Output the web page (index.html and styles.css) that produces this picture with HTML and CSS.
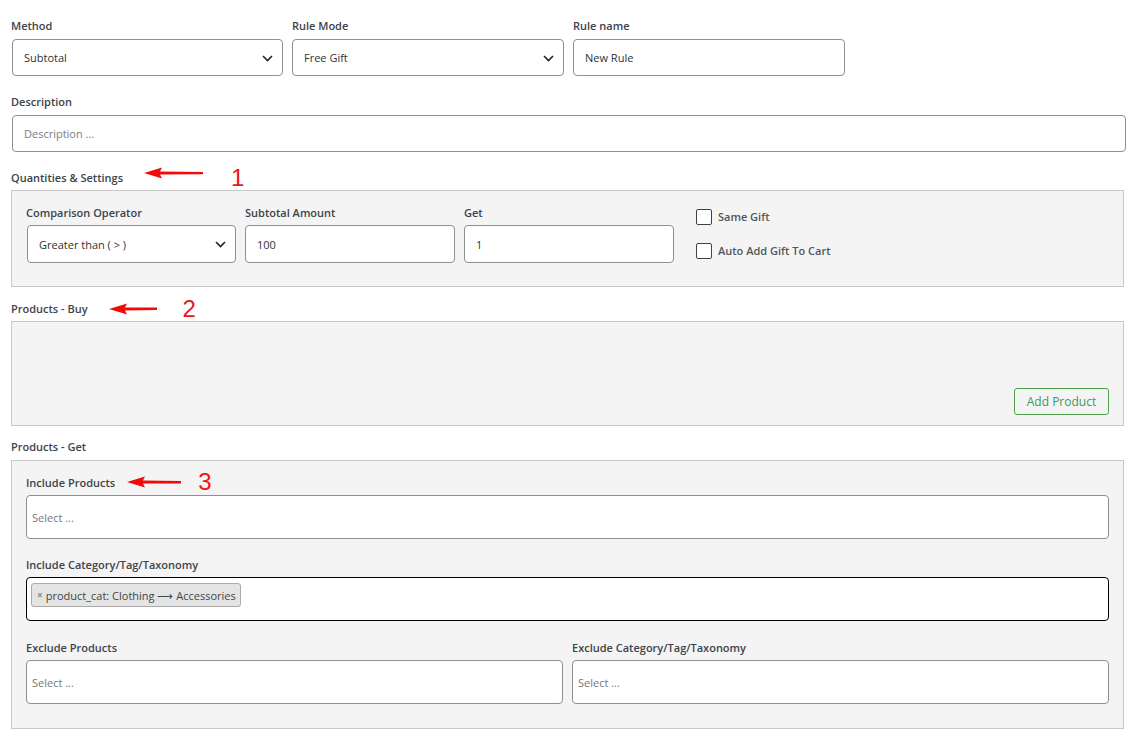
FILE: index.html
```html
<!DOCTYPE html>
<html lang="en">
<head>
  <meta charset="UTF-8">
  <meta name="viewport" content="width=device-width, initial-scale=1.0">
  <title>Free Gift Rule</title>
  <link rel="stylesheet" href="styles.css">
</head>
<body>
  <form class="rule-form">
    <!-- Primera fila: metodo, modo y nombre -->
    <div class="row row--top">
      <div class="field field--top">
        <label class="field__label">Method</label>
        <div class="select-wrap">
          <select class="control control--select"><option>Subtotal</option></select>
          <svg class="select-wrap__chevron" width="11" height="7" viewBox="0 0 11 7" fill="none"><path d="M1 1l4.5 4.5L10 1" stroke="#1d2327" stroke-width="1.6"/></svg>
        </div>
      </div>
      <div class="field field--top">
        <label class="field__label">Rule Mode</label>
        <div class="select-wrap">
          <select class="control control--select"><option>Free Gift</option></select>
          <svg class="select-wrap__chevron" width="11" height="7" viewBox="0 0 11 7" fill="none"><path d="M1 1l4.5 4.5L10 1" stroke="#1d2327" stroke-width="1.6"/></svg>
        </div>
      </div>
      <div class="field field--top">
        <label class="field__label">Rule name</label>
        <input class="control" type="text" value="New Rule">
      </div>
    </div>

    <div class="field field--desc">
      <label class="field__label">Description</label>
      <input class="control" type="text" placeholder="Description ...">
    </div>

    <!-- Cantidades y ajustes -->
    <section class="section">
      <div class="section__title">
        <span class="section__text">Quantities &amp; Settings
          <span class="note note--1">
            <svg class="note__arrow" width="60" height="12" viewBox="0 0 60 12"><path d="M0 6L18 0.5 16 4.6 59 4.9 59 7.3 16 7.6 18 11.5Z" fill="#f00a0a"/></svg>
            <span class="note__num">1</span>
          </span>
        </span>
      </div>
      <div class="panel panel--settings">
        <div class="field field--mid">
          <label class="field__label">Comparison Operator</label>
          <div class="select-wrap">
            <select class="control control--select control--mid"><option>Greater than ( &gt; )</option></select>
            <svg class="select-wrap__chevron" width="11" height="7" viewBox="0 0 11 7" fill="none"><path d="M1 1l4.5 4.5L10 1" stroke="#1d2327" stroke-width="1.6"/></svg>
          </div>
        </div>
        <div class="field field--mid">
          <label class="field__label">Subtotal Amount</label>
          <input class="control control--mid" type="text" value="100">
        </div>
        <div class="field field--mid">
          <label class="field__label">Get</label>
          <input class="control control--mid" type="text" value="1">
        </div>
        <div class="checks">
          <label class="check"><span class="check__box"></span>Same Gift</label>
          <label class="check"><span class="check__box"></span>Auto Add Gift To Cart</label>
        </div>
      </div>
    </section>

    <!-- Productos que se compran -->
    <section class="section">
      <div class="section__title">
        <span class="section__text">Products - Buy
          <span class="note note--2">
            <svg class="note__arrow" width="49" height="12" viewBox="0 0 49 12"><path d="M0 6L18 0.5 16 4.6 48 4.6 48 7 16 7.6 18 11.5Z" fill="#f00a0a"/></svg>
            <span class="note__num">2</span>
          </span>
        </span>
      </div>
      <div class="panel panel--buy">
        <button class="btn-add" type="button">Add Product</button>
      </div>
    </section>

    <!-- Productos que se regalan -->
    <section class="section section--get">
      <div class="section__title">
        <span class="section__text">Products - Get</span>
      </div>
      <div class="panel panel--get">
        <div class="field">
          <label class="field__label">
            <span class="section__text">Include Products
              <span class="note note--3">
                <svg class="note__arrow" width="55" height="12" viewBox="0 0 55 12"><path d="M0 6L18 0.5 16 4.6 54 5 54 7.4 16 7.6 18 11.5Z" fill="#f00a0a"/></svg>
                <span class="note__num">3</span>
              </span>
            </span>
          </label>
          <div class="multi">Select ...</div>
        </div>
        <div class="field">
          <label class="field__label">Include Category/Tag/Taxonomy</label>
          <div class="multi multi--focus">
            <span class="chip"><span class="chip__x">×</span>product_cat: Clothing ⟶ Accessories</span>
          </div>
        </div>
        <div class="row row--exclude">
          <div class="field">
            <label class="field__label">Exclude Products</label>
            <div class="multi">Select ...</div>
          </div>
          <div class="field">
            <label class="field__label">Exclude Category/Tag/Taxonomy</label>
            <div class="multi">Select ...</div>
          </div>
        </div>
      </div>
    </section>
  </form>
</body>
</html>
```

FILE: styles.css
```css
* {
  box-sizing: border-box;
}
body {
  margin: 0;
  background: #fff;
  font-family: 'Open Sans', 'Noto Sans', sans-serif;
  font-size: 11px;
  color: #2c3338;
}
.rule-form {
  width: 1125px;
  padding: 18px 0 0 11px;
}
.row {
  display: flex;
  gap: 9px;
}
/* ----------------- Campos ----------------- */
.field {
  display: flex;
  flex-direction: column;
}
.field__label {
  display: block;
  font-weight: 600;
  font-size: 11px;
  line-height: 15px;
  color: #3c434a;
  margin-bottom: 6px;
}
.field--top {
  width: 272px;
}
/* el primer control va 1px a la derecha de su etiqueta */
.field--top:first-child .control,
.field--mid:first-child .control {
  margin-left: 1px;
  width: calc(100% - 1px);
}
.field--desc .control {
  margin-left: 1px;
}
.field--desc {
  margin-top: 18px;
}
.control {
  width: 100%;
  height: 37px;
  border: 1px solid #8c8f94;
  border-radius: 4px;
  background: #fff;
  font-family: inherit;
  font-size: 11px;
  color: #2c3338;
  padding: 0 11px;
  outline: none;
}
.control::placeholder {
  color: #7a7d80;
}
.control--select {
  appearance: none;
  -webkit-appearance: none;
  padding-right: 30px;
}
.control--mid {
  height: 38px;
}
.select-wrap {
  position: relative;
}
.select-wrap__chevron {
  position: absolute;
  right: 10px;
  top: 50%;
  margin-top: -3px;
  pointer-events: none;
}
/* ----------------- Secciones ----------------- */
.section {
  margin-top: 18px;
}
.section + .section {
  margin-top: 14px;
}
.section + .section--get {
  margin-top: 13px;
}
.section__title {
  font-weight: 600;
  line-height: 15px;
  color: #3c434a;
  margin-bottom: 5px;
}
.section--get .section__title {
  margin-bottom: 6px;
}
.section__text {
  position: relative;
  display: inline-block;
}
.panel {
  width: 1113px;
  background: #f4f4f4;
  border: 1px solid #c8c8c8;
}
.panel--settings {
  display: flex;
  align-items: flex-start;
  gap: 9px;
  padding: 14px 14px 23px;
}
.panel--settings .field__label {
  margin-bottom: 5px;
}
.field--mid {
  width: 210px;
}
.checks {
  display: flex;
  flex-direction: column;
  gap: 18px;
  margin-left: 13px;
  padding-top: 4px;
}
.check {
  display: flex;
  align-items: center;
  gap: 6px;
  font-weight: 600;
  color: #50575e;
  line-height: 16px;
}
.check__box {
  width: 16px;
  height: 16px;
  border: 1px solid #3c434a;
  border-radius: 2px;
  background: #fff;
}
.panel--buy {
  height: 105px;
  display: flex;
  align-items: flex-end;
  justify-content: flex-end;
  padding: 0 14px 10px;
}
.btn-add {
  height: 27px;
  width: 95px;
  border: 1px solid #4ba24b;
  border-radius: 3px;
  background: transparent;
  color: #3c9a58;
  font-family: inherit;
  font-size: 12px;
  cursor: pointer;
}
.panel--get {
  padding: 14px 14px 24px;
}
.panel--get > .field + .field {
  margin-top: 18px;
}
.panel--get > .row--exclude {
  margin-top: 19px;
}
.panel--get .field__label {
  margin-bottom: 5px;
}
.multi {
  height: 44px;
  border: 1px solid #8c8f94;
  border-radius: 4px;
  background: #fff;
  padding: 0 5px;
  display: flex;
  align-items: center;
  color: #777;
  font-size: 11px;
}
.multi--focus {
  border-color: #000;
  align-items: flex-start;
  padding: 5px 4px;
}
.chip {
  display: inline-flex;
  align-items: center;
  height: 24px;
  padding: 0 4px 0 5px;
  background: #e4e4e4;
  border: 1px solid #aaa;
  border-radius: 3px;
  color: #444;
  font-size: 11px;
}
.chip__x {
  color: #888;
  font-weight: 700;
  font-size: 10px;
  margin-right: 3px;
}
.row--exclude .field {
  flex: 1;
}
/* ----------------- Anotaciones ----------------- */
.note {
  position: absolute;
  left: 100%;
  top: 0;
  display: flex;
  align-items: center;
  height: 15px;
  pointer-events: none;
}
.note__arrow {
  display: block;
}
.note__num {
  font-family: 'Liberation Sans', Arial, sans-serif;
  font-weight: 400;
  font-size: 24px;
  line-height: 15px;
  color: #f01414;
}
.note--1 {
  margin-left: 21px;
}
.note--1 .note__arrow {
  margin-top: -10px;
}
.note--1 .note__num {
  margin-left: 27px;
}
.note--2 {
  margin-left: 21px;
}
.note--2 .note__num {
  margin-left: 25px;
}
.note--3 {
  margin-left: 12px;
}
.note--3 .note__arrow {
  margin-top: -2px;
}
.note--3 .note__num {
  margin-left: 16px;
  margin-top: -2px;
}
```
